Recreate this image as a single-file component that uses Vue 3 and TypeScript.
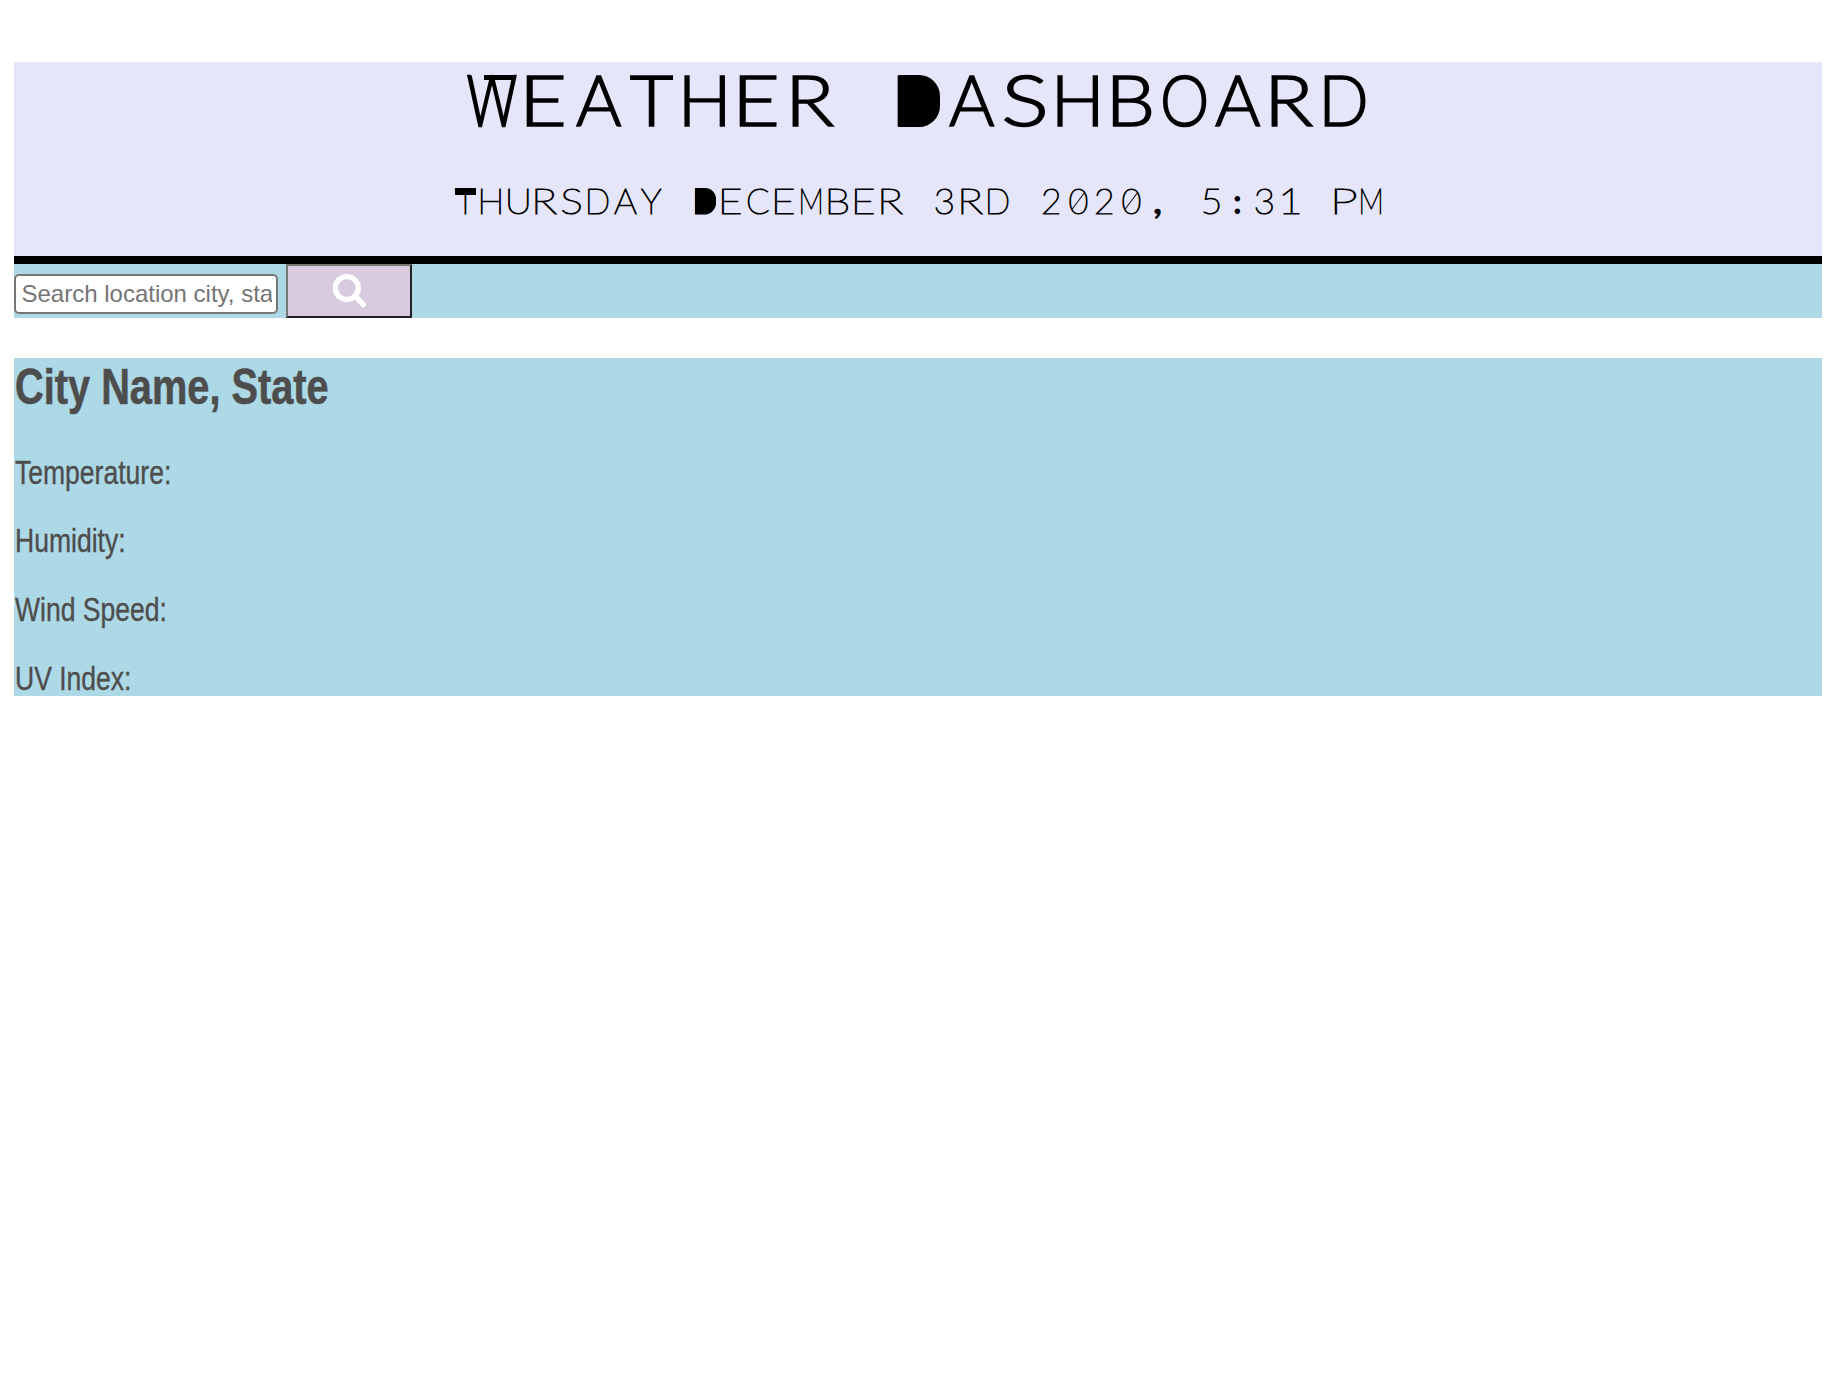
<script setup lang="ts">
interface Glyph {
  ch: string
  cls: string
  style: { transform: string; fontSize: string }
}

// Ink widths of the display lettering, as a share of the cell pitch.
const inkWidths: Record<string, number> = {
  W: 0.9, E: 0.68, A: 0.85, T: 0.78, H: 0.74, R: 0.755, D: 0.755, S: 0.735,
  B: 0.71, O: 0.795, U: 0.77, Y: 0.77, C: 0.78, M: 0.74, P: 0.75,
  '0': 0.66, '1': 0.63, '2': 0.61, '3': 0.63, '5': 0.64, ':': 0.25, ',': 0.25,
}
const inkShift: Record<string, number> = { E: 0.01, R: 0.03, D: 0.01, B: 0.01, P: 0.04, '2': -0.01 }

const ctx = document.createElement('canvas').getContext('2d')!

function layout(text: string, pitch: number, size: number, weight: number, accents: number[]): Glyph[] {
  return [...text].map((ch, i) => {
    const dot = ch === ':' || ch === ','
    ctx.font = `${dot ? 900 : weight} ${size}px Lato`
    const m = ctx.measureText(ch)
    const ink = m.actualBoundingBoxRight + m.actualBoundingBoxLeft
    const target = (inkWidths[ch] ?? 0) * pitch
    const sx = ink > 0 && target > 0 ? target / ink : 1
    const tx = pitch / 2 + (inkShift[ch] ?? 0) * pitch - target / 2 + m.actualBoundingBoxLeft * sx
    const cls = accents.includes(i) ? `accent-${ch}` : ch === '0' ? 'slashed' : dot ? 'dot' : ''
    return { ch, cls, style: { transform: `translateX(${tx.toFixed(2)}px) scaleX(${sx.toFixed(4)})`, fontSize: `${size}px` } }
  })
}

const title = layout('WEATHER DASHBOARD', 53.3, 70.5, 300, [0, 8])
const date = layout('THURSDAY DECEMBER 3RD 2020, 5:31 PM', 26.65, 35, 100, [0, 9])
const readings = ['Temperature:', 'Humidity:', 'Wind Speed:', 'UV Index:']
</script>

<template>
  <main class="page">
    <header class="banner">
      <h1 class="title">
        <span v-for="(g, i) in title" :key="i" class="cell" :class="g.cls"><span class="glyph" :style="g.style">{{ g.ch }}</span></span>
      </h1>
      <p class="date">
        <span v-for="(g, i) in date" :key="i" class="cell" :class="g.cls"><span class="glyph" :style="g.style">{{ g.ch }}</span></span>
      </p>
    </header>
    <form class="search" @submit.prevent>
      <input class="field" type="text" placeholder="Search location city, state" />
      <button class="go" type="submit" aria-label="Search">
        <svg width="36" height="36" viewBox="0 0 36 36" fill="none" stroke="#fff">
          <circle cx="15.8" cy="15" r="11.5" stroke-width="5.2" />
          <path d="M24.5 23.7 32.3 31.6" stroke-width="5.4" stroke-linecap="round" />
        </svg>
      </button>
    </form>
    <section class="current">
      <h2 class="city"><span class="narrow">City Name, State</span></h2>
      <p v-for="r in readings" :key="r" class="reading"><span class="narrow">{{ r }}</span></p>
    </section>
  </main>
</template>

<style>
body { background: #fff; }
</style>

<style scoped>
.page { padding: 62px 14px 0; font-family: "Liberation Sans", Arial, sans-serif; }
.banner { box-sizing: border-box; height: 202px; background: #e6e6fa; border-bottom: 8px solid #000; color: #000; }
.title, .date { display: flex; justify-content: center; margin: 0; font-family: Lato, sans-serif; }
.title { height: 80px; line-height: 74px; font-weight: 300; -webkit-text-stroke: 1.6px #000; }
.date { height: 40px; margin-top: 40px; line-height: 37px; font-weight: 100; -webkit-text-stroke: 1.15px #000; }
.cell { position: relative; flex: none; white-space: pre; }
.title .cell { width: 53.3px; }
.date .cell { width: 26.65px; }
.glyph { display: inline-block; transform-origin: 0 50%; }
.dot .glyph { font-weight: 900; -webkit-text-stroke: 0; }
.title .accent-W .glyph { -webkit-text-stroke-width: 2.6px; }
.title .accent-W::after { content: ""; position: absolute; left: 19px; top: 13px; width: 31px; height: 4.5px; background: #000; }
.title .accent-D::after { content: ""; position: absolute; left: 7.7px; top: 13px; width: 41px; height: 52px; background: #000; border-radius: 0 21px 21px 0; }
.date .accent-T::after { content: ""; position: absolute; left: 3.3px; top: 6px; width: 20.5px; height: 7px; background: #000; }
.date .accent-D::after { content: ""; position: absolute; left: 3.6px; top: 6px; width: 20.6px; height: 26px; background: #000; border-radius: 0 11px 11px 0; }
.slashed::after { content: ""; position: absolute; left: 3.3px; top: 18.5px; width: 20px; height: 1.3px; background: #000; transform: rotate(-53deg); }

.search { display: flex; height: 54px; background: #add8e6; }
.field { box-sizing: border-box; width: 264px; height: 40px; margin: 10px 8px 0 0; padding: 0 4px 0 5.5px; border: 2px solid #767676; border-radius: 5px; background: #fff; font: 24px "Liberation Sans", Arial, sans-serif; outline: none; }
.field::placeholder { color: #757575; opacity: 1; }
.go { box-sizing: border-box; display: flex; width: 126px; height: 54px; padding: 7px 0 0 43px; border: 2px solid; border-color: #767676 #212121 #212121 #767676; border-radius: 0; background: #d8cbe0; }
.current { height: 338px; margin-top: 40px; background: #add8e6; color: #4d4d4d; }
.narrow { display: inline-block; transform: scaleX(.816); transform-origin: 0 50%; white-space: nowrap; margin-left: .8px; -webkit-text-stroke: .35px #4d4d4d; }
.city { height: 94.8px; margin: 0; font-size: 49.5px; line-height: 58px; }
.city .narrow { transform: scaleX(.803); -webkit-text-stroke-width: .6px; margin-left: 1px; }
.reading { height: 68.6px; margin: 0; font-size: 32.5px; line-height: 40px; }
</style>
